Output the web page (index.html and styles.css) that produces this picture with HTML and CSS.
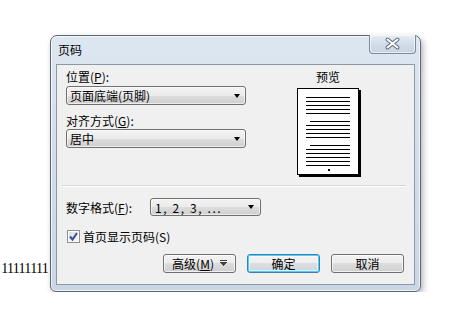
FILE: index.html
```html
<!DOCTYPE html>
<html lang="zh-CN">
<head>
<meta charset="UTF-8">
<title>页码</title>
<link rel="stylesheet" href="styles.css">
</head>
<body>
<div class="desk">
  <div class="doc"><span>11111111</span></div>

  <div class="window">
    <div class="titlebar">
      <span class="title">页码</span>
      <div class="close">
        <svg width="47" height="19" viewBox="0 0 47 19">
          <path d="M18.5 5.5L28.5 13.5M28.5 5.5L18.5 13.5" stroke="#5f6c7c" stroke-width="4" stroke-linecap="round"/>
          <path d="M18.5 5.5L28.5 13.5M28.5 5.5L18.5 13.5" stroke="#fff" stroke-width="2" stroke-linecap="round"/>
        </svg>
      </div>
    </div>

    <div class="client">
      <div class="top">
        <div class="fields">
          <label class="lbl">位置(<u>P</u>):</label>
          <div class="combo"><span>页面底端(页脚)</span><i class="arrow"></i></div>
          <label class="lbl second">对齐方式(<u>G</u>):</label>
          <div class="combo tight"><span>居中</span><i class="arrow"></i></div>
        </div>
        <div class="preview">
          <div class="pv-title">预览</div>
          <svg class="page" width="64" height="89" viewBox="0 0 64 89" shape-rendering="crispEdges">
            <rect x="2" y="2" width="62" height="87" fill="#000"/>
            <rect x="0" y="0" width="62" height="87" fill="#000"/>
            <rect x="1" y="1" width="60" height="85" fill="#fff"/>
            <path d="M9 9.5H53M9 13.5H53M9 17.5H53M9 21.5H53M9 25.5H53
                     M13 33.5H53M9 37.5H53M9 41.5H53M9 45.5H53M9 49.5H53
                     M13 57.5H53M9 61.5H53M9 65.5H53M9 69.5H53M9 73.5H53M9 77.5H53"
                  stroke="#000" stroke-width="1"/>
            <rect x="31" y="81" width="2" height="2" fill="#000"/>
          </svg>
        </div>
      </div>

      <div class="sep"></div>

      <div class="format">
        <span class="fmt-label">数字格式(<u>F</u>):</span>
        <div class="combo small"><span class="nums">1, 2, 3, ...</span><i class="arrow"></i></div>
      </div>

      <div class="check">
        <svg width="13" height="13" viewBox="0 0 13 13">
          <defs>
            <linearGradient id="cb" x1="0" y1="0" x2="1" y2="1">
              <stop offset="0" stop-color="#d9dfe7"/>
              <stop offset="1" stop-color="#f6f8fa"/>
            </linearGradient>
          </defs>
          <rect x="0.5" y="0.5" width="12" height="12" fill="#fff" stroke="#8e8f8f"/>
          <rect x="2" y="2" width="9" height="9" fill="url(#cb)"/>
          <path d="M3 6.5L5.5 9.5L10 3" fill="none" stroke="#3b4f8e" stroke-width="2"/>
        </svg>
        <span>首页显示页码(S)</span>
      </div>

      <div class="buttons">
        <button class="btn"><span>高级(<u>M</u>)</span>
          <svg width="7" height="7" viewBox="0 0 7 7" shape-rendering="crispEdges">
            <rect x="0" y="0" width="7" height="1" fill="#444"/>
            <path d="M0 2H7L3.5 6Z" fill="#444"/>
          </svg>
        </button>
        <button class="btn default"><span>确定</span></button>
        <button class="btn"><span>取消</span></button>
      </div>
    </div>
  </div>
</div>
</body>
</html>
```

FILE: styles.css
```css
/* page */
body {
  margin: 0;
  background: #fff;
  font-family: "Noto Sans CJK SC", sans-serif;
  font-size: 12px;
  color: #000;
}

.desk {
  display: flex;
  padding-top: 35px;
}

/* document text behind the dialog */
.doc {
  width: 48px;
  margin-right: 2px;
  display: flex;
  justify-content: flex-end;
  padding-top: 226px;
  font-family: "Liberation Serif", serif;
  font-size: 14px;
  letter-spacing: -0.7px;
  line-height: 16px;
  white-space: nowrap;
}

/* window frame */
.window {
  width: 371px;
  height: 257px;
  box-sizing: border-box;
  border: 1px solid #5b6672;
  border-radius: 7px 7px 6px 6px;
  background: linear-gradient(#dde7f2, #d2deeb 45%, #c9d6e5);
  box-shadow: 2px 3px 6px rgba(0, 0, 0, 0.3), inset 0 0 0 1px rgba(255, 255, 255, 0.7);
  padding: 0 5px 6px 5px;
  display: flex;
  flex-direction: column;
}

.titlebar {
  height: 28px;
  display: flex;
  justify-content: space-between;
  align-items: flex-start;
}

.title {
  line-height: 28px;
  padding-left: 2px;
}

.close {
  width: 47px;
  height: 19px;
  margin-top: -1px;
  margin-right: -1px;
  box-sizing: border-box;
  border: 1px solid #7c8a9b;
  border-top: none;
  border-radius: 0 0 4px 4px;
  background: linear-gradient(#e7edf4, #d3dde9 50%, #c8d3e1);
  box-shadow: inset 0 0 0 1px rgba(255, 255, 255, 0.6);
}

.close svg {
  display: block;
  margin: -1px 0 0 -1px;
}

/* client area */
.client {
  flex: 1;
  background: #f0f0f0;
  border: 1px solid #8c99a9;
  display: flex;
  flex-direction: column;
}

.top {
  display: flex;
  height: 115px;
}

.fields {
  margin-left: 9px;
  width: 180px;
  padding-top: 5px;
}

.lbl {
  display: block;
  line-height: 14px;
}

.lbl.second {
  margin-top: 9px;
}

.combo {
  height: 19px;
  box-sizing: border-box;
  margin-top: 2px;
  border: 1px solid #707070;
  border-radius: 3px;
  background: linear-gradient(#f3f3f3, #ebebeb 50%, #dddddd 50%, #cfcfcf);
  box-shadow: inset 0 0 0 1px rgba(255, 255, 255, 0.6);
  display: flex;
  align-items: center;
  padding: 0 5px 0 3px;
  line-height: 17px;
}

.combo.tight {
  margin-top: 1px;
}

.arrow {
  margin-left: auto;
  width: 0;
  height: 0;
  border-left: 3.5px solid transparent;
  border-right: 3.5px solid transparent;
  border-top: 4px solid #000;
}

/* preview */
.preview {
  margin-left: 51px;
  width: 66px;
  padding-top: 5px;
}

.pv-title {
  width: 62px;
  text-align: center;
  line-height: 14px;
}

.page {
  display: block;
  margin-top: 4px;
}

.sep {
  margin: 5px 8px 0 5px;
  border-top: 1px solid #d5d5d5;
  border-bottom: 1px solid #fff;
}

.format {
  margin-top: 11px;
  padding-left: 9px;
  display: flex;
  align-items: center;
  height: 18px;
}

.fmt-label {
  width: 84px;
}

.combo.small {
  width: 111px;
  height: 18px;
  margin-top: 0;
  padding-left: 4px;
  padding-right: 6px;
}

.nums {
  letter-spacing: 1.6px;
}

.check {
  margin-top: 14px;
  padding-left: 10px;
  height: 13px;
  display: flex;
  align-items: center;
  gap: 3px;
  line-height: 13px;
}

.check svg {
  display: block;
}

.buttons {
  margin-top: 11px;
  padding-right: 10px;
  display: flex;
  justify-content: flex-end;
  gap: 11px;
}

.btn {
  width: 73px;
  height: 19px;
  padding: 0;
  font-family: inherit;
  font-size: 12px;
  line-height: 17px;
  color: #000;
  border: 1px solid #707070;
  border-radius: 3px;
  background: linear-gradient(#f3f3f3, #ebebeb 50%, #dddddd 50%, #cfcfcf);
  box-shadow: inset 0 0 0 1px rgba(255, 255, 255, 0.7);
  display: flex;
  align-items: center;
  justify-content: center;
  gap: 6px;
}

.btn.default {
  border-color: #3c7fb1;
  box-shadow: inset 0 0 0 1px #48d1fd, inset 0 0 0 2px rgba(255, 255, 255, 0.5);
  background: linear-gradient(#f2f4f6, #ebedef 50%, #dcdfe2 50%, #d0d4d8);
}

.btn u,
.lbl u,
.fmt-label u {
  text-underline-offset: 1px;
}
```
